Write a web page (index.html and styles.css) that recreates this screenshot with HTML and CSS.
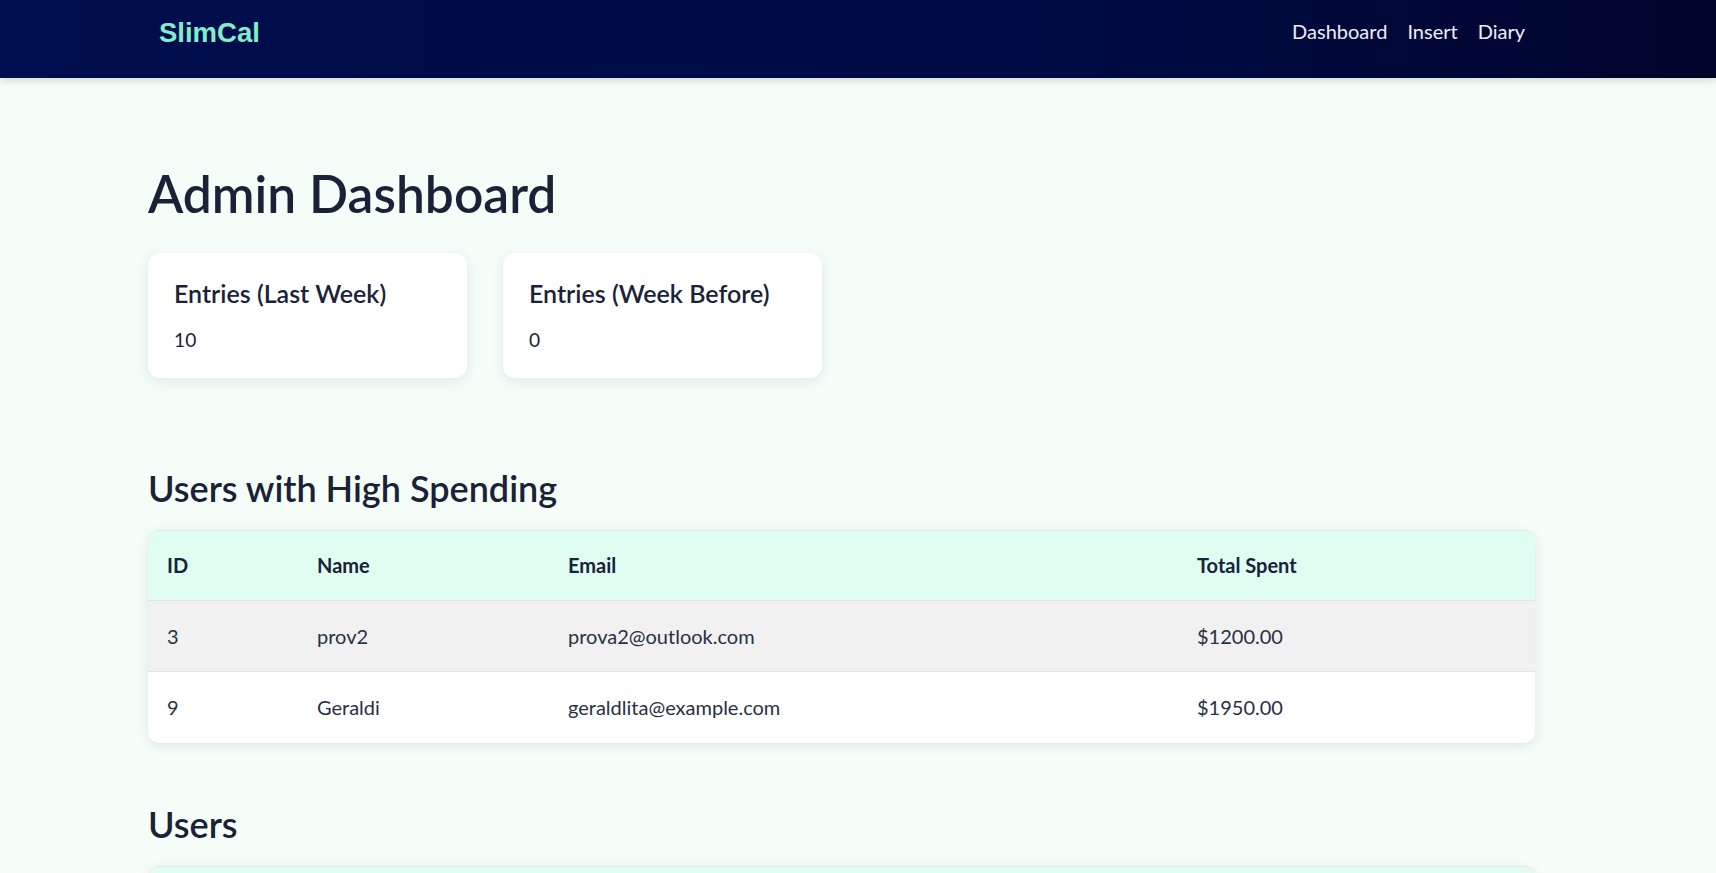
FILE: index.html
```html
<!DOCTYPE html>
<html lang="en">
<head>
<meta charset="utf-8">
<title>SlimCal - Admin Dashboard</title>
<link rel="stylesheet" href="styles.css">
</head>
<body>
<header class="topbar">
  <a class="logo" href="#">SlimCal</a>
  <nav class="nav">
    <a href="#">Dashboard</a>
    <a href="#">Insert</a>
    <a href="#">Diary</a>
  </nav>
</header>
<main class="main">
  <h1 class="page-title">Admin Dashboard</h1>
  <div class="stats">
    <div class="stat-card">
      <h3 class="stat-title">Entries (Last Week)</h3>
      <p class="stat-value">10</p>
    </div>
    <div class="stat-card">
      <h3 class="stat-title">Entries (Week Before)</h3>
      <p class="stat-value">0</p>
    </div>
  </div>

  <h2 class="section-title first">Users with High Spending</h2>
  <table class="data-table">
    <colgroup>
      <col class="c-id"><col class="c-name"><col class="c-email"><col class="c-total">
    </colgroup>
    <thead>
      <tr><th>ID</th><th>Name</th><th>Email</th><th>Total Spent</th></tr>
    </thead>
    <tbody>
      <tr class="alt"><td>3</td><td>prov2</td><td>prova2@outlook.com</td><td>$1200.00</td></tr>
      <tr><td>9</td><td>Geraldi</td><td>geraldlita@example.com</td><td>$1950.00</td></tr>
    </tbody>
  </table>

  <h2 class="section-title">Users</h2>
  <table class="data-table">
    <colgroup>
      <col class="c-id"><col class="c-name"><col class="c-email"><col class="c-total">
    </colgroup>
    <thead>
      <tr><th>ID</th><th>Name</th><th>Email</th><th>Role</th></tr>
    </thead>
    <tbody>
      <tr class="alt"><td>3</td><td>prov2</td><td>prova2@outlook.com</td><td>user</td></tr>
      <tr><td>9</td><td>Geraldi</td><td>geraldlita@example.com</td><td>user</td></tr>
    </tbody>
  </table>
</main>
</body>
</html>
```
FILE: styles.css
```css
* { box-sizing: border-box; }

body {
  margin: 0;
  background: #f5fdf9;
  font-family: Lato, "Open Sans", sans-serif;
  color: #1a2238;
}

.topbar {
  height: 78px;
  display: flex;
  justify-content: space-between;
  align-items: flex-start;
  padding: 15px 191px 0 159px;
  background: linear-gradient(90deg, #000d4e 0%, #000b45 60%, #00052c 100%);
  box-shadow: 0 2px 8px rgba(0, 0, 0, 0.16);
}

.logo {
  margin-top: 2px;
  font-family: "Liberation Sans", Arial, sans-serif;
  font-weight: 700;
  font-size: 27.5px;
  line-height: 32px;
  color: #82eec9;
  text-decoration: none;
}

.nav {
  display: flex;
  gap: 20px;
}

.nav a {
  font-size: 20px;
  line-height: 32px;
  color: #eceef8;
  text-decoration: none;
}

.main {
  width: 1387px;
  margin-left: 148px;
  padding-top: 85px;
}

.page-title {
  margin: 0 0 28px;
  font-size: 51.5px;
  line-height: 1.2;
  font-weight: 600;
  color: #1a2238;
}

.stats {
  display: flex;
  gap: 36px;
}

.stat-card {
  width: 319px;
  height: 125px;
  padding: 25px 25px 0 26px;
  background: #ffffff;
  border-radius: 12px;
  box-shadow: 0 3px 12px rgba(20, 40, 30, 0.10);
}

.stat-title {
  margin: 0;
  font-size: 25px;
  line-height: 1.2;
  font-weight: 600;
  color: #1a2238;
}

.stat-value {
  margin: 20px 0 0;
  font-size: 19.2px;
  line-height: 1.2;
  color: #1a2238;
}

.section-title {
  margin: 60px 0 20px;
  font-size: 36px;
  line-height: 1.2;
  font-weight: 600;
  color: #1a2238;
}

.section-title.first {
  margin-top: 89px;
}

.data-table {
  width: 1387px;
  table-layout: fixed;
  border-collapse: separate;
  border-spacing: 0;
  background: #ffffff;
  border-radius: 12px;
  overflow: hidden;
  border-top: 1px solid #e2e2ea;
  box-shadow: 0 3px 12px rgba(20, 40, 30, 0.10);
}

.c-id { width: 150px; }
.c-name { width: 251px; }
.c-email { width: 629px; }
.c-total { width: 357px; }

.data-table th,
.data-table td {
  text-align: left;
  padding: 0 20px 0 19px;
  line-height: 1.2;
}

.data-table th {
  height: 70px;
  font-size: 20px;
  background: #e0fdf1;
  font-weight: 700;
  color: #1a2238;
  border-bottom: 1px solid #e2e2ea;
}

.data-table td {
  height: 71px;
  font-size: 20px;
  color: #2a3044;
}

.data-table tbody tr:not(:last-child) td {
  border-bottom: 1px solid #e2e2ea;
}

.data-table tr.alt td {
  background: #f1f1f1;
}
```
